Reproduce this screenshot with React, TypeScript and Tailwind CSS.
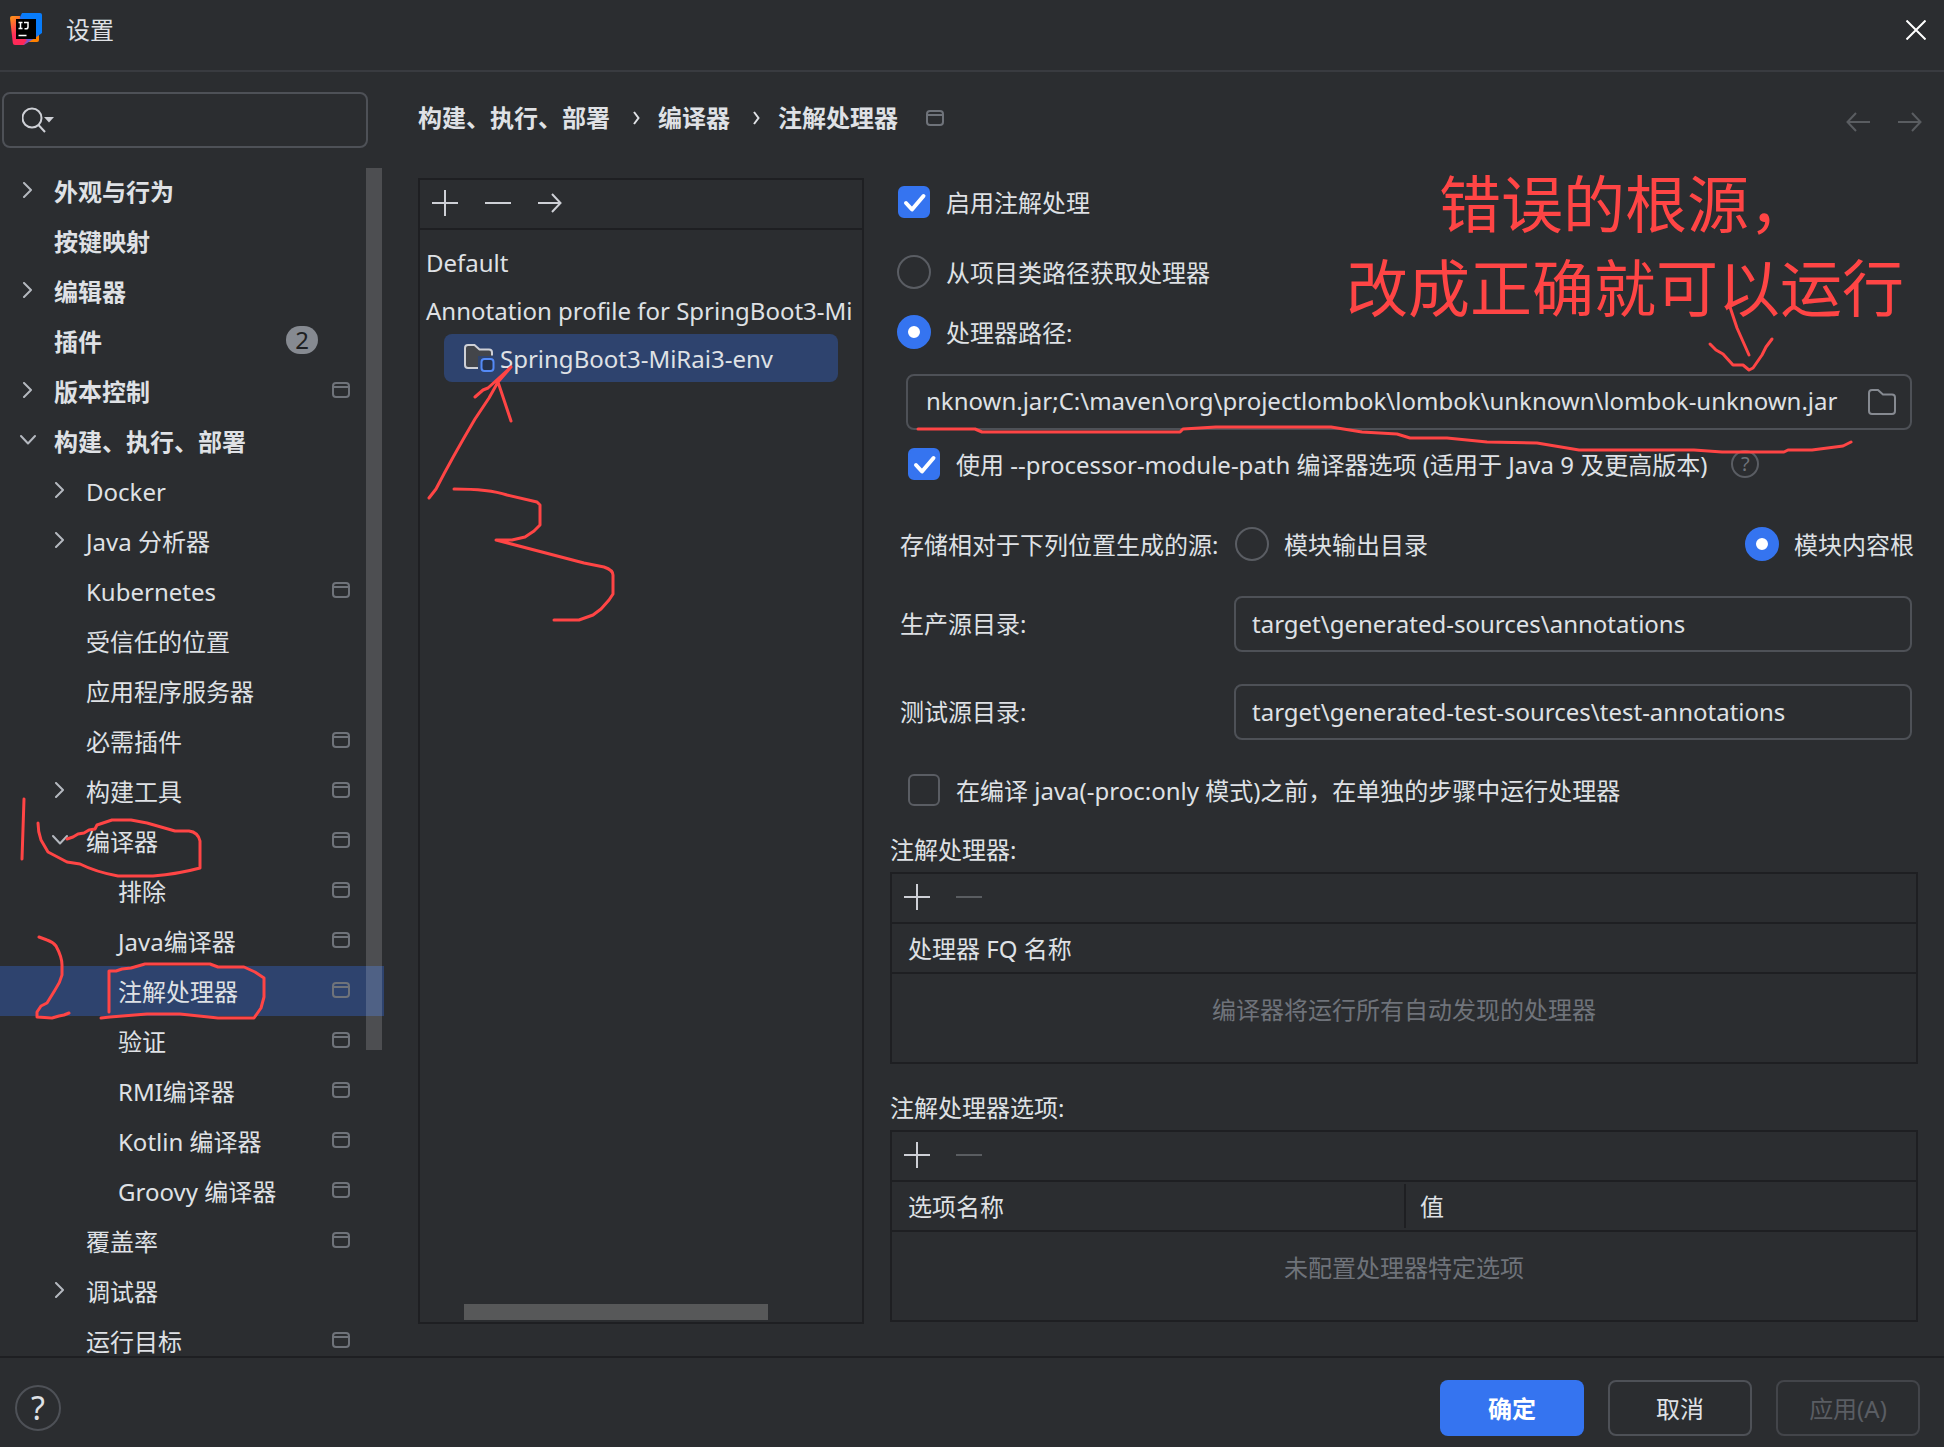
import React from "react";

const MARK = "#ff4545";

function WindowIcon() {
  return (
    <svg width="18" height="16" viewBox="0 0 18 16" fill="none" stroke="#6f737a" strokeWidth="2" className="shrink-0">
      <rect x="1" y="1" width="16" height="14" rx="3" />
      <path d="M1 5h16" />
    </svg>
  );
}

function Chevron({ open }: { open: boolean }) {
  return (
    <svg width="16" height="16" viewBox="0 0 16 16" fill="none" stroke="#b4b8bf" strokeWidth="2" strokeLinejoin="round" strokeLinecap="round">
      <path d={open ? "M1 4l7 7.5L15 4" : "M4 1l7 7-7 7"} />
    </svg>
  );
}

function PlusIcon() {
  return (
    <svg width="26" height="26" viewBox="0 0 26 26" stroke="#ced0d6" strokeWidth="2">
      <path d="M0 13h26M13 0v26" />
    </svg>
  );
}

function MinusIcon({ dim = false }: { dim?: boolean }) {
  return (
    <svg width="26" height="26" viewBox="0 0 26 26" stroke={dim ? "#5a5d61" : "#ced0d6"} strokeWidth="2">
      <path d="M0 13h26" />
    </svg>
  );
}

function ArrowIcon({ left = false, color }: { left?: boolean; color: string }) {
  return (
    <svg width="24" height="20" viewBox="0 0 24 20" fill="none" stroke={color} strokeWidth="2">
      <path d={left ? "M24 10H2M10 1L1.5 10 10 19" : "M0 10h22M14 1l8.5 9L14 19"} />
    </svg>
  );
}

function Logo() {
  return (
    <svg width="34" height="34" viewBox="0 0 34 34" className="shrink-0">
      <defs>
        <linearGradient id="lg-warm" x1="0" y1="0" x2="0.4" y2="1">
          <stop offset="0.1" stopColor="#ff8a1c" />
          <stop offset="0.65" stopColor="#ff2d5a" />
          <stop offset="1" stopColor="#ff2857" />
        </linearGradient>
        <linearGradient id="lg-mix" x1="1" y1="0" x2="0" y2="1">
          <stop offset="0.4" stopColor="#087cfa" />
          <stop offset="0.7" stopColor="#7a55c8" />
          <stop offset="1" stopColor="#fe2857" />
        </linearGradient>
      </defs>
      <path d="M19 29h9q2 0 2-2v-7l-8 2z" fill="#ff8100" />
      <path d="M13 0h18q2 0 2 2v18l-7 5-11 7H8L7 12z" fill="url(#lg-mix)" />
      <path d="M1 5q0-2 2-2h8l-1 20 8 4-4 5H6q-2 0-2.200-2z" fill="url(#lg-warm)" />
      <rect x="7" y="6" width="20" height="20" fill="#000" />
      <path d="M9.500 9.500h4M11.500 9.500v6M9.500 15.500h4M15 9.500h4v4.500q0 1.800-2 1.800h-1.500M9.500 22.500h8" stroke="#fff" strokeWidth="1.500" fill="none" />
    </svg>
  );
}

type Item = { label: string; level: 0 | 1 | 2; open?: boolean; scoped?: boolean; badge?: number; selected?: boolean };

const items: Item[] = [
  { label: "外观与行为", level: 0, open: false },
  { label: "按键映射", level: 0 },
  { label: "编辑器", level: 0, open: false },
  { label: "插件", level: 0, badge: 2 },
  { label: "版本控制", level: 0, open: false, scoped: true },
  { label: "构建、执行、部署", level: 0, open: true },
  { label: "Docker", level: 1, open: false },
  { label: "Java 分析器", level: 1, open: false },
  { label: "Kubernetes", level: 1, scoped: true },
  { label: "受信任的位置", level: 1 },
  { label: "应用程序服务器", level: 1 },
  { label: "必需插件", level: 1, scoped: true },
  { label: "构建工具", level: 1, open: false, scoped: true },
  { label: "编译器", level: 1, open: true, scoped: true },
  { label: "排除", level: 2, scoped: true },
  { label: "Java编译器", level: 2, scoped: true },
  { label: "注解处理器", level: 2, scoped: true, selected: true },
  { label: "验证", level: 2, scoped: true },
  { label: "RMI编译器", level: 2, scoped: true },
  { label: "Kotlin 编译器", level: 2, scoped: true },
  { label: "Groovy 编译器", level: 2, scoped: true },
  { label: "覆盖率", level: 1, scoped: true },
  { label: "调试器", level: 1, open: false },
  { label: "运行目标", level: 1, scoped: true },
];

const indent = { 0: "pl-4", 1: "pl-12", 2: "pl-20" };

function TreeRow({ item }: { item: Item }) {
  return (
    <li>
      <button
        className={`flex h-[50px] w-full items-center pr-[34px] pb-0.5 text-left ${indent[item.level]} ${item.level === 0 ? "font-bold" : ""} ${item.selected ? "bg-[#2e436e]" : ""}`}
      >
        <span className="flex w-[38px] shrink-0 pl-1">{item.open !== undefined && <Chevron open={item.open} />}</span>
        <span className="flex-1 pt-1 whitespace-nowrap">{item.label}</span>
        {item.badge && (
          <span className="mr-8 flex h-7 w-8 items-center justify-center rounded-full bg-[#868a91] font-normal text-[#1e1f22]">{item.badge}</span>
        )}
        {item.scoped && <WindowIcon />}
      </button>
    </li>
  );
}

function Sidebar() {
  return (
    <aside className="flex w-96 shrink-0 flex-col pt-5">
      <div className="mr-4 ml-0.5 flex h-14 shrink-0 items-center rounded-lg border-2 border-[#4e5157] pl-[18px]">
        <svg width="34" height="26" viewBox="0 0 34 26" fill="none" stroke="#ced0d6" strokeWidth="2">
          <circle cx="10" cy="11" r="9.500" />
          <path d="M16.500 18l6.500 7" />
          <path d="M22 10h10l-5 5.500z" fill="#ced0d6" stroke="none" />
        </svg>
        <input type="text" aria-label="搜索设置" className="min-w-0 flex-1 bg-transparent px-2 outline-none" />
      </div>
      <nav className="relative mt-[18px] min-h-0 flex-1 overflow-hidden">
        <ul>
          {items.map((item) => (
            <TreeRow key={item.label} item={item} />
          ))}
        </ul>
        <div className="absolute top-0.5 right-0.5 h-[882px] w-4 bg-white/16" />
      </nav>
    </aside>
  );
}

function ProfileList() {
  return (
    <section className="flex w-[446px] shrink-0 flex-col overflow-hidden border-2 border-[#1e1f22]">
      <div className="flex h-[50px] shrink-0 items-center gap-[27px] border-b-2 border-[#1e1f22] pb-0.5 pl-3">
        <button aria-label="添加"><PlusIcon /></button>
        <button aria-label="移除"><MinusIcon /></button>
        <button aria-label="移动到"><ArrowIcon color="#ced0d6" /></button>
      </div>
      <ul className="flex-1 pt-2 whitespace-nowrap">
        <li className="h-12 pl-1.5 leading-[50px]">Default</li>
        <li className="h-12 pl-1.5 leading-[50px]">Annotation profile for SpringBoot3-Mi</li>
        <li className="mr-6 ml-6 flex h-12 items-center gap-[5px] rounded-lg bg-[#2e436e] pl-5">
          <svg width="31" height="30" viewBox="0 0 31 30" fill="none">
            <path d="M14 25H4q-3 0-3-3V5q0-3 3-3h6.500l5 4.500H25q3 0 3 3V13H14z" fill="#43454a" />
            <path d="M14 25H4q-3 0-3-3V5q0-3 3-3h6.500l5 4.500H25q3 0 3 3v3" stroke="#ced0d6" strokeWidth="2" />
            <rect x="17.500" y="16" width="12" height="12" rx="3" fill="#25324d" stroke="#548af7" strokeWidth="2" />
          </svg>
          <span className="pt-0.5">SpringBoot3-MiRai3-env</span>
        </li>
      </ul>
      <div className="mb-0.5 ml-[44px] h-4 w-[304px] shrink-0 bg-[#575859]" />
    </section>
  );
}

function Check({ label, checked = false }: { label: string; checked?: boolean }) {
  return (
    <label className="flex items-center gap-4 whitespace-nowrap">
      <span className="relative block h-8 w-8 shrink-0">
        <input
          type="checkbox"
          defaultChecked={checked}
          className="peer block h-8 w-8 appearance-none rounded-md border-2 border-[#5a5d63] checked:border-[#3574f0] checked:bg-[#3574f0]"
        />
        <svg viewBox="0 0 32 32" fill="none" className="pointer-events-none absolute inset-0 hidden h-8 w-8 peer-checked:block">
          <path d="M8 17l6 6.500L25.500 10" stroke="#fff" strokeWidth="4" strokeLinecap="round" strokeLinejoin="round" />
        </svg>
      </span>
      <span className="pt-0.5">{label}</span>
    </label>
  );
}

function Radio({ label, name, checked = false }: { label: string; name: string; checked?: boolean }) {
  return (
    <label className="flex items-center gap-[15px] whitespace-nowrap">
      <input
        type="radio"
        name={name}
        defaultChecked={checked}
        className="h-[34px] w-[34px] shrink-0 appearance-none rounded-full border-2 border-[#5a5d63] checked:border-[11px] checked:border-[#3574f0] checked:bg-white"
      />
      <span className="pt-0.5">{label}</span>
    </label>
  );
}

function DirectoryField({ id, label, value }: { id: string; label: string; value: string }) {
  return (
    <div className="mr-1.5 ml-2.5 flex h-14 items-center">
      <label htmlFor={id} className="w-[334px] shrink-0">{label}</label>
      <input id={id} defaultValue={value} className="h-14 min-w-0 flex-1 rounded-lg border-2 border-[#4e5157] bg-transparent px-4 pb-0.5 outline-none" />
    </div>
  );
}

function TableBox({ columns, empty }: { columns: string[]; empty: string }) {
  return (
    <div className="border-2 border-[#1e1f22]">
      <div className="flex h-12 items-center gap-[26px] pb-0.5 pl-3">
        <button aria-label="添加"><PlusIcon /></button>
        <button aria-label="移除" disabled><MinusIcon dim /></button>
      </div>
      <table className="w-full table-fixed border-collapse">
        <thead>
          <tr className="border-y-2 border-[#1e1f22]">
            {columns.map((c, i) => (
              <th key={c} className="h-[50px] p-0 text-left font-normal">
                <div className={`flex h-11 items-center pt-0.5 ${i > 0 ? "border-l-2 border-[#1e1f22] pl-3.5" : "pl-4"}`}>{c}</div>
              </th>
            ))}
          </tr>
        </thead>
        <tbody>
          <tr>
            <td colSpan={columns.length} className="h-[89px] p-0 pb-4 text-center text-[#6f737a]">{empty}</td>
          </tr>
        </tbody>
      </table>
    </div>
  );
}

function ProcessorSettings() {
  return (
    <section className="relative flex min-w-0 flex-1 flex-col">
      <div className="mt-1.5 ml-2 flex h-[36px] items-center"><Check label="启用注解处理" checked /></div>
      <div className="mt-[34px] ml-[7px] flex h-[36px] items-center"><Radio name="source" label="从项目类路径获取处理器" /></div>
      <div className="mt-6 ml-[7px] flex h-[36px] items-center"><Radio name="source" label="处理器路径:" checked /></div>
      <div className="mt-6 mr-1.5 ml-4 flex h-14 items-center rounded-lg border-2 border-[#4e5157] pr-3.5 pl-[18px]">
        <input
          aria-label="处理器路径"
          defaultValue={"nknown.jar;C:\\maven\\org\\projectlombok\\lombok\\unknown\\lombok-unknown.jar"}
          className="min-w-0 flex-1 bg-transparent pb-0.5 outline-none"
        />
        <button aria-label="浏览" className="ml-3.5">
          <svg width="28" height="26" viewBox="0 0 28 26" fill="none" stroke="#868a91" strokeWidth="2">
            <path d="M1 4q0-3 3-3h6l5 4.500h9q3 0 3 3V22q0 3-3 3H4q-3 0-3-3z" />
          </svg>
        </button>
      </div>
      <div className="mt-4 ml-[18px] flex h-[36px] items-center gap-6">
        <Check label="使用 --processor-module-path 编译器选项 (适用于 Java 9 及更高版本)" checked />
        <button aria-label="帮助" className="flex h-7 w-7 shrink-0 items-center justify-center rounded-full border-2 border-[#5a5d63] text-xl text-[#6f737a]">?</button>
      </div>
      <div className="mt-[44px] mr-1 ml-2.5 flex h-[36px] items-center">
        <span className="w-[335px] shrink-0 pt-0.5 whitespace-nowrap">存储相对于下列位置生成的源:</span>
        <div className="flex flex-1 justify-between">
          <Radio name="store" label="模块输出目录" />
          <Radio name="store" label="模块内容根" checked />
        </div>
      </div>
      <div className="mt-[34px] flex flex-col gap-8">
        <DirectoryField id="prod" label="生产源目录:" value={"target\\generated-sources\\annotations"} />
        <DirectoryField id="test" label="测试源目录:" value={"target\\generated-test-sources\\test-annotations"} />
      </div>
      <div className="mt-8 ml-[18px] flex h-[36px] items-center"><Check label="在编译 java(-proc:only 模式)之前，在单独的步骤中运行处理器" /></div>
      <h2 className="mt-6 mb-1 leading-9">注解处理器:</h2>
      <TableBox columns={["处理器 FQ 名称"]} empty="编译器将运行所有自动发现的处理器" />
      <h2 className="mt-[26px] mb-1 leading-9">注解处理器选项:</h2>
      <TableBox columns={["选项名称", "值"]} empty="未配置处理器特定选项" />
      <p className="pointer-events-none absolute -top-4 right-3.5 text-center text-[62px] leading-[84px] text-[#ff4545]">
        错误的根源，<br />改成正确就可以运行
      </p>
    </section>
  );
}

function Strokes() {
  return (
    <svg
      width="1944"
      height="1447"
      viewBox="0 0 1944 1447"
      fill="none"
      stroke={MARK}
      strokeWidth="3"
      strokeLinecap="round"
      strokeLinejoin="round"
      className="pointer-events-none absolute top-0 left-0"
    >
      <path d="M24 799L22 859" />
      <path d="M38 823Q38 832 41 840L48 852L67 862L80 864Q96 872 118 876H153Q178 874 200 868V841Q198 832 189 831H175L147 823L131 820H112L97 825L95 829L89 830L84 833L78 834L73 837L67 839" />
      <path d="M39 937L47 940Q53 942 56 946Q62 957 62 965V975Q60 983 55 990L47 1003L41 1006L37 1012V1017L52 1018L59 1016L64 1015L69 1013" />
      <path d="M109 1012V971L116 971L122 969L131 968L145 964H210L218 967H244L255 972L264 978V997L261 1008L254 1018H218L180 1014H147L110 1017L101 1018" />
      <path d="M429 498L436 489Q452 458 475 419L489 398L498 382L511 367M475 397L483 390L488 388L511 367M498 382L511 421" />
      <path d="M454 489Q489 489 507 495L537 502L540 505V525L534 531L525 537L512 540H496L584 563L604 567Q613 570 613 575V594L609 600L601 609L593 615L579 620H554" />
      <path d="M918 429H975L982 432H1180L1183 429L1216 427H1331L1362 432L1397 434L1410 438H1447L1487 442L1537 443L1579 450H1694L1722 452H1784L1788 450H1812L1843 446L1851 442" />
      <path d="M1729 304L1737 328L1749 355M1710 344L1716 350L1723 354L1733 365H1743L1749 370L1753 368L1762 355L1766 347L1772 339" />
    </svg>
  );
}

export default function App() {
  return (
    <div
      lang="zh-CN"
      className="relative flex h-screen w-full flex-col overflow-hidden bg-[#2b2d30] font-['Noto_Sans','Noto_Sans_CJK_SC',sans-serif] text-[24px] leading-9 text-[#dfe1e5]"
    >
      <header className="flex h-[72px] shrink-0 items-center border-b-2 border-[#393b40] pr-[18px] pb-2.5 pl-[9px]">
        <Logo />
        <h1 className="ml-[23px] flex-1">设置</h1>
        <button aria-label="关闭">
          <svg width="20" height="20" viewBox="0 0 20 20" stroke="#fff" strokeWidth="2">
            <path d="M0.500 0.500l19 19M19.500 0.500l-19 19" />
          </svg>
        </button>
      </header>
      <div className="flex min-h-0 flex-1">
        <Sidebar />
        <main className="flex min-w-0 flex-1 flex-col pr-[26px] pb-8 pl-[34px]">
          <div className="flex h-[106px] shrink-0 items-center justify-between pb-3.5">
            <nav className="flex items-center font-bold">
              <a href="#build">构建、执行、部署</a>
              <svg width="48" height="14" viewBox="0 0 48 14" fill="none" stroke="#dfe1e5" strokeWidth="2"><path d="M24 1l4.500 6L24 13" /></svg>
              <a href="#compiler">编译器</a>
              <svg width="48" height="14" viewBox="0 0 48 14" fill="none" stroke="#dfe1e5" strokeWidth="2"><path d="M24 1l4.500 6L24 13" /></svg>
              <a href="#annotation" className="mr-7">注解处理器</a>
              <WindowIcon />
            </nav>
            <div className="mt-2 -mr-1 flex gap-7">
              <button aria-label="后退" disabled><ArrowIcon left color="#5a5d61" /></button>
              <button aria-label="前进" disabled><ArrowIcon color="#5a5d61" /></button>
            </div>
          </div>
          <div className="flex min-h-0 flex-1 gap-[26px]">
            <ProfileList />
            <ProcessorSettings />
          </div>
        </main>
      </div>
      <footer className="flex h-[91px] shrink-0 items-center gap-6 border-t-2 border-[#1e1f22] pr-6 pb-[11px] pl-[15px] pt-[22px]">
        <button aria-label="帮助" className="flex h-[46px] w-[46px] items-center justify-center rounded-full border-2 border-[#4e5157] text-[32px]">?</button>
        <button className="ml-auto h-14 w-36 rounded-lg bg-[#3574f0] pt-0.5 font-bold text-white">确定</button>
        <button className="h-14 w-36 rounded-lg border-2 border-[#4e5157] pt-0.5">取消</button>
        <button disabled className="h-14 w-36 rounded-lg border-2 border-[#43454a] pt-0.5 text-[#5a5d63]">应用(A)</button>
      </footer>
      <Strokes />
    </div>
  );
}
